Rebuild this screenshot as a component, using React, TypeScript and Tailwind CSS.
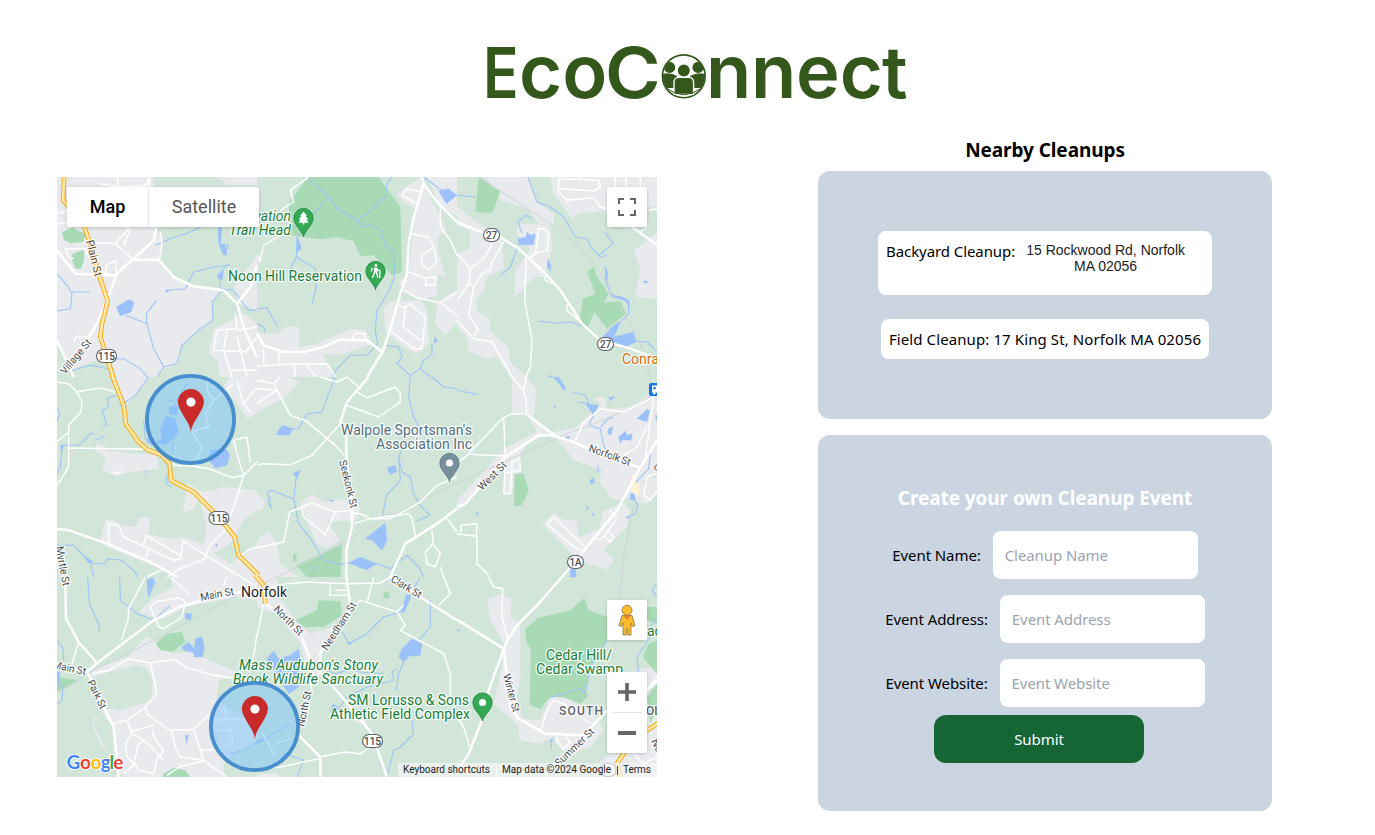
import React from "react";

type Tile = {
  x: number;
  y: number;
  urban?: string;
  green?: string;
  park?: string;
  water?: string;
  stream?: string;
  rail?: string;
  minor?: string;
  major?: string;
  highway?: string;
};

// Map geometry, drawn in 600-unit tiles that each cover 200px of the map.
const tiles: Tile[] = [
  {
    x: 0,
    y: 0,
    urban:
      "M0,0 H285 L300,60 L290,150 L320,185 L308,245 L350,300 L420,330 L490,342 L465,375 L468,430 L430,455 L375,505 L362,565 L320,575 L300,600 H180 L160,545 L140,540 L45,580 L0,500Z M485,0 L510,25 L600,25 V0Z M470,455 L530,425 L560,410 L600,440 V600 H490 L480,550 L455,530Z M600,235 L560,290 L530,330 L545,380 L600,400Z",
    park: "M15,165 L45,152 L85,170 L80,195 L40,198 L20,188Z M48,230 L80,218 L82,245 L72,275 L55,275 L42,240Z",
    water: "M178,390 L215,368 L232,375 L222,405 L190,417Z M325,338 L337,340 L330,348Z M485,145 L495,155 L490,200 L505,205 L510,235 L497,230 L484,195Z M480,300 L500,280 L495,310Z",
    stream:
      "M295,205 L340,185 L400,165 L430,150 M0,290 L30,325 L45,350 L40,395 L0,402 M45,345 H100 M205,415 L270,440 L290,515 L320,570 L360,560 L375,505 L430,455 L468,430 L465,375 L490,345 M270,440 L268,410 L298,370 M300,600 L320,570 M330,340 L385,335 L410,285 L470,270 L520,265 M485,160 L490,200 L515,205 L500,235 M515,260 L485,290 L490,335 L530,340 L575,400 L600,400 M45,580 L100,565 L155,575 L170,545 L200,545 L250,575 L270,600",
    minor:
      "M130,20 L185,30 L180,0 M185,30 L260,25 M0,110 L30,100 M0,140 L90,130 M90,195 L175,200 L225,245 M175,200 L215,155 M205,150 L220,155 L200,205 M25,215 L85,215 L100,250 L145,290 M25,215 L35,240 L50,245 M145,290 L148,265 L175,250 L178,290 M310,165 L315,200 L308,245 M50,495 L60,478 L100,480 M480,460 L470,520 L570,525 M480,460 L535,455 M510,460 L500,520 L525,600 M535,410 L540,460 L600,450 M540,480 L570,600 M525,580 H600 M565,525 L600,480",
    major:
      "M0,220 L55,290 L175,295 M298,150 L290,190 L230,245 L180,290 L150,370 L120,440 L90,490 L30,560 M230,248 L305,248 L350,300 L410,328 L500,340 L540,380 L560,450 L600,540 M0,490 L50,600 M540,380 L580,330 L600,265 M275,0 V40 M170,100 L275,15",
    highway: "M22,-10 L18,70 L75,130 L105,215 L125,290 L152,372 L135,440 L130,480 L170,605",
  },
  {
    x: 200,
    y: 0,
    urban:
      "M490,0 L420,50 L440,75 L475,95 L455,290 L425,315 L440,345 L490,370 L540,355 L545,290 L565,300 L545,230 L540,180 L570,160 L545,110 L520,60Z M380,390 L400,375 L490,370 L510,400 L515,500 L480,530 L440,510 L385,465Z M540,375 L600,340 V440 L560,475 L535,440Z M0,470 L60,470 L90,448 L128,450 L125,510 L180,500 L280,455 L325,458 L345,500 L290,520 L250,535 L200,530 L210,560 L240,600 H0Z M510,0 H600 V120 L545,80Z M0,235 L15,235 L10,250 L0,265Z",
    park: "M155,0 H365 L430,90 L435,285 L405,295 L350,235 L310,237 L290,193 L240,180 L190,187 L140,180 L100,175 L95,80 L130,30Z",
    water: "M545,42 L575,35 L600,55 L568,80Z M122,178 L133,215 L120,225Z M535,478 L541,495 L530,497Z",
    stream:
      "M155,5 L215,60 L175,105 L120,180 L118,240 L175,275 L178,330 L165,380 M118,240 L100,275 M215,60 L240,95 L300,130 L330,110 L385,60 L390,20 L405,0 M300,130 L320,150 L345,145 L370,160 L385,205 L410,225 L412,300 L395,345 L360,400 L355,460 L362,500 L330,535 L280,535 L240,575 L225,600 M500,0 L540,30 L560,45 M0,395 L30,392 L45,420 L60,445 M0,440 L20,450 L25,465 M380,505 L425,510 L435,540 L420,560 L460,595 L490,575 L520,600 M490,575 L500,550 L525,530 V500",
    minor:
      "M155,0 L100,40 L110,75 L70,100 M70,175 L20,205 L8,255 M490,45 L450,35 L435,55 L475,78 M460,170 L515,180 L530,210 L495,235 L492,258 L515,278 L540,255 L530,210 M455,285 L500,302 L535,300 L532,325 L505,325 L510,303 M440,340 L480,362 L550,378 L600,415 M550,378 L600,345 M550,90 L550,150 L580,190 L600,235 M425,385 L440,392 L460,382 L505,420 L495,515 L470,515 L400,462 M445,392 L438,450 L490,490 M285,485 L295,468 L325,470 V490 M20,515 V560 M65,525 V565 M0,568 L110,560 L210,560 L235,600 M110,560 L115,600 M150,560 L160,580 L180,600",
    major: "M495,0 L500,20 L470,120 L455,200 L450,290 L430,350 L405,440 L378,522 L330,600 M500,20 L540,75 L600,135 M0,468 L20,505 L80,525 L140,525 L200,510 L250,488 L330,490 L372,522",
  },
  {
    x: 400,
    y: 0,
    urban:
      "M85,0 H215 L240,75 L290,110 V145 L245,140 L210,95 L130,70 L105,25Z M280,0 H600 V90 L450,100 L365,110 L345,125 L290,50Z M0,90 L60,135 L100,160 L135,190 L140,275 L90,300 L80,345 L55,370 L60,400 L100,430 L95,460 L155,510 L160,555 L210,600 H160 L120,540 L80,545 L35,520 L30,480 L0,450Z M180,140 L280,145 L285,215 L260,300 L230,300 L205,330 L172,358 L175,280 L220,220 L180,170Z M530,220 L600,170 V365 L535,360 L550,270Z",
    green: "M0,145 L40,160 L38,215 L0,230Z",
    park: "M65,0 L130,45 L105,108 L55,105Z M390,285 L410,268 L420,300 L455,350 L440,378 L490,372 L507,410 L450,455 L412,405 L390,455 L365,440 L378,365 L415,350Z",
    water: "M182,185 L208,180 L210,165 L220,175 L235,170 L230,203 L185,203Z M272,245 L282,265 L280,283 L270,270Z M437,480 L470,445 L492,433 L470,480 L530,465 L537,495 L510,508 L470,495Z M443,265 L452,290 L450,320 L455,330 L447,310Z M460,355 L490,358 L515,370 L518,390 L505,370 L465,360Z M558,312 L572,312 L568,322Z M275,595 L290,600 H275Z",
    stream:
      "M213,0 L240,75 L280,90 L320,120 L355,180 L390,185 L405,215 L430,240 L450,235 M445,165 L468,200 L425,235 M195,168 L182,135 L205,115 L225,125 M180,215 L160,270 L130,295 M245,433 L295,438 L345,435 L370,448 M0,55 L55,60 M450,280 L445,310 L460,350 L515,375 L515,410 L495,430 M535,492 L570,495 L600,525",
    rail: "M65,0 L150,55 L280,140 L370,210 L440,300 L500,410 L545,480 L560,540 L580,600",
    minor:
      "M305,0 V45 L330,70 L410,62 L430,90 L450,95 M305,5 L425,10 L430,30 L410,42 L310,35 M370,0 V5 M475,0 V30 M508,0 V30 M550,0 V30 M575,100 L600,95 M0,230 L40,275 L35,320 L0,370 M40,275 L85,240 L105,200 M35,320 L50,330 L35,415 L65,460 L50,475 M50,330 L75,290 L100,280 L105,255 L140,195 M0,430 L50,485 L105,495 L150,570 L165,600 M235,230 L245,155 L265,155 L275,175 L270,220 L235,230 L215,245 M207,245 L203,370 L225,490 L220,570 L207,600 M265,295 L265,310 L300,325 M330,380 L330,400 L370,435 M550,165 L570,150",
    major: "M0,135 L60,160 L130,180 L185,215 L265,290 L310,340 L375,440 L430,490 L520,515 L600,545 M525,150 L600,203",
  },
  {
    x: 0,
    y: 200,
    urban:
      "M175,0 H275 L265,20 L235,55 L210,85 L190,40Z M490,40 L520,0 H600 V110 L570,125 L535,70Z M117,200 L140,205 L150,222 L300,235 L305,275 L220,285 L175,298 L135,280 L148,240 L117,225Z M390,318 L440,345 L500,330 L600,340 V600 H350 L300,570 L150,510 L130,490 L145,430 L170,428 L190,445 L235,450 L250,420 L280,422 L275,470 L330,485 L380,480 L440,500 L450,450 L425,360 L410,400 L378,405Z",
    green: "M600,400 L560,430 L520,500 L470,530 L520,560 L600,500Z",
    water:
      "M455,250 L460,218 H510 L518,235 L510,265 L475,273Z M310,155 L328,118 L355,125 L365,165 L345,188 L322,205 L298,198 L315,180Z M335,90 L365,88 L360,115 L338,110Z M328,68 H350 L345,76Z M272,180 L290,185 L285,205 L270,195Z M78,535 L110,555 L95,557Z M475,500 L482,503 L478,510Z M265,285 L270,280 V288Z M10,205 H20 L14,225Z",
    stream:
      "M275,0 L235,55 L190,88 L210,70 M175,55 L150,65 L155,90 L135,100 L150,145 L138,148 M145,178 L115,190 M112,170 L100,170 L65,205 L15,205 L10,270 L0,290 M0,90 L8,110 L0,135 M330,290 L328,320 L345,330 M260,130 L265,185 L280,200 M350,185 L345,230 M350,90 L365,60 L390,20 M0,505 L50,505 L100,555 L110,600 M145,560 L150,545 L195,550 L235,585 L240,600 M105,560 H145",
    minor:
      "M0,15 L35,20 L60,45 L75,75 L72,105 L35,145 L35,270 L0,325 M55,45 L130,33 L175,45 M0,195 L35,165 M35,213 L260,217 M155,500 L155,440 L185,445 L200,480 L350,550 L370,545 L378,492 L600,630 M260,500 L268,475 L370,535 M275,515 L268,540 M350,235 V265 L410,268 L455,275 L525,302 L560,295 M415,268 V250 M165,283 L180,290 L195,283 M530,190 L570,180 L580,255 M530,190 L545,250 L560,295 L600,255 M560,295 L530,390 L500,465 L455,510 L445,545 L370,575 L330,600 M530,20 L470,70 L445,110 L455,150 L405,163 L435,215 L415,250 M470,70 L450,40 L455,0 M540,10 L560,80 L580,105 M560,80 L600,30 M270,600 L320,575 M545,540 L580,515 L600,512",
    major: "M0,457 L30,458 L150,500 L280,555 L360,600",
    highway: "M165,-5 L200,85 L207,142 L245,195 L270,217 L315,235 L338,260 L342,310 L410,345 L465,400 L505,445 L533,480 L545,535 L605,595",
  },
  {
    x: 200,
    y: 200,
    urban:
      "M0,0 H95 L125,15 L80,65 L0,105Z M0,350 L25,375 L15,400 L0,402Z M130,380 L165,350 L200,375 L260,365 L310,395 L295,430 L210,435 L250,490 L210,512 L180,500 L160,455Z M0,490 L35,462 L60,500 L70,560 L125,600 H0Z",
    park: "M118,565 L255,502 L250,600 H150Z M108,530 H118 V553 H108Z",
    water: "M57,173 L75,145 L108,155 L97,175Z M390,272 L415,265 L420,285 L398,292Z M108,290 L130,280 L120,305Z M325,485 L385,437 L390,490 L375,520 L345,490Z M275,558 L310,540 L360,560 L330,578 L305,570Z M33,360 L45,395 L38,390Z M162,570 L180,572 L170,576Z M215,370 H230 L228,375Z",
    stream:
      "M235,0 L215,50 L195,105 L150,110 L125,155 L100,155 M460,0 L455,60 L470,120 L495,170 M445,195 L425,240 L430,310 L388,355 L380,400 L375,430 M425,240 L435,285 L460,300 L470,350 L485,380 L520,415 L480,432 M118,300 L110,365 L40,340 L30,350 L42,370 M110,365 L125,440 L165,490 L200,550 L250,562 L280,558 M360,560 L400,575 L450,535 L485,570 L500,600 M525,0 L560,30 L600,35",
    rail: "M0,630 L150,555 L400,418 L600,318",
    minor:
      "M190,0 L240,15 L270,0 M270,0 L310,35 M300,45 L330,62 L415,30 L430,50 L430,75 L365,120 L270,85 M0,10 L50,20 L70,0 M0,80 L60,40 L0,35 M50,20 L100,115 L145,130 L235,205 L262,235 M250,140 L165,235 L100,263 L15,260 L0,265 M0,512 L80,495 L98,405 L165,378 L235,405 L285,400 M133,385 L140,420 L180,450 L205,475 L235,405 M290,408 L315,412 L340,425 L290,440 M340,425 L400,425 L490,375 L540,325 L600,300 M340,425 L455,410 L465,425 L475,475 M525,460 L528,500 L505,525 L510,560 L535,570 L550,530 L528,500 M550,570 L560,600 M570,425 L600,465",
    major: "M335,0 L270,75 L250,135 L268,180 V240 L285,390 L285,450 L268,520 V600 M600,395 L540,440 L445,500 L400,600",
  },
  {
    x: 400,
    y: 200,
    urban:
      "M165,0 H210 L238,40 L230,130 L285,165 L350,155 L430,80 L410,62 L445,60 L450,95 L520,90 L600,35 V300 L560,310 L525,355 L500,370 L465,365 L425,310 L435,280 L350,250 L300,185 L260,175 L210,200 L185,245 L190,280 L160,355 L140,350 L150,250 L90,300 L20,390 L0,400 V370 L150,210 L240,165 L210,110 L165,110Z M255,440 L290,408 L320,428 H358 L365,480 L425,455 L440,400 L500,378 L520,400 L510,450 L440,520 L470,550 L450,578 L395,560 L345,530Z M530,370 L570,380 L600,350 V290 L540,330Z",
    park: "M172,290 H200 L215,340 L195,385 L172,388Z M145,185 L150,200 L145,215Z",
    water:
      "M385,80 L425,85 L410,115Z M290,0 H305 L325,30 L323,42Z M290,85 L297,90 L293,95Z M455,62 L475,58 L460,72Z M455,155 L468,148 L462,175 L453,170Z M485,180 L505,162 L510,175 L525,170 L523,190 L495,188 L490,200Z M540,125 L570,97 L578,100 L570,135 L555,130Z M398,310 L410,303 L413,317 L402,322Z M388,385 L396,395 L392,400Z M58,405 L65,410 L62,418Z M520,350 L530,345 L535,370 L520,368Z M340,575 H357 V600 H340Z M325,180 L340,178 L335,187Z M505,420 L520,418 L512,425Z M595,115 H600 V135Z M405,407 L411,413 L407,418Z",
    stream: "M0,40 L25,45 L60,52 M350,45 L385,55 L410,115 L395,145 L430,155 L440,205 L450,225 M365,75 L395,80 M510,420 L535,410 L542,385 L530,360 L528,325 L575,275 L580,230 M430,150 L455,125 L470,120 M425,285 L422,265",
    rail: "M0,320 L150,250 L330,170 L400,145 L530,90 L600,45 M530,380 L500,540 L485,700",
    minor:
      "M165,0 L200,40 L208,0 M200,40 L208,70 V110 L160,112 L135,125 L30,235 L0,260 M140,125 L145,235 M35,232 L145,237 M140,350 L145,260 M165,255 L188,245 L190,280 L145,288 M165,255 L160,350 L140,350 M355,190 L378,140 L430,95 L500,105 L560,75 L590,60 M590,60 L565,240 M570,150 L540,210 L500,235 M270,440 L290,420 L385,510 M270,440 L350,510 L375,520 M415,485 L430,490 L480,425 M440,475 L460,495 L470,480 L450,460 M600,290 L570,300 L560,355 L580,370 L600,340 M0,470 L58,478 L60,440 L12,445 V465 M60,478 V560 L95,595 M460,400 L480,425",
    major: "M0,390 L25,380 L130,260 L145,240 L245,175 L285,175 L350,195 L450,240 L550,272 M208,112 L300,180 M600,190 L545,280 L480,400 L315,600",
  },
  {
    x: 0,
    y: 400,
    urban:
      "M245,105 L290,60 L350,30 L340,0 H600 V70 L540,60 L385,90 L320,125 L275,115Z M105,280 L210,240 L270,178 L350,230 L400,225 L550,290 L485,310 L480,360 L520,400 L600,420 V600 H205 L175,580 L165,440 L145,425 L140,400 L105,440 L130,500 L175,560 L180,600 L250,600 L270,560 L300,520 L200,400 L180,395 L280,375 L288,310 L270,280 L230,265 L190,280 L180,305 L160,285 L105,300Z M105,430 L165,390 L270,400 L400,420 L520,400 L480,600 H185Z",
    green: "M155,285 L200,275 L240,265 L270,275 L285,310 L285,370 L180,402 L130,380 L110,310Z M500,565 L535,525 L600,495 V600 H500Z",
    park: "M297,200 L330,170 L375,165 L385,195 L345,225 L310,220Z M0,300 L65,310 L0,345Z M320,590 L350,572 L385,580 L400,600 H315Z",
    water: "M375,210 L395,195 L412,215 L415,185 L435,180 L442,210 L437,240 L410,240 L412,228 L380,220Z M270,15 L285,0 L295,15 L275,60Z M385,475 L395,475 L388,500Z M0,285 H8 V320 H0Z M385,108 L405,110 L400,130 L385,125Z",
    stream: "M92,0 L97,80 L125,140 L127,165 M188,0 L190,70 L240,110 L290,130 L340,85 M270,0 L275,60 M0,190 L18,215 L20,250 M0,320 L18,330 L15,370 L0,380 M520,530 L560,520 L600,495",
    rail: "M0,350 L100,285 L300,185 L540,55",
    minor:
      "M265,0 L215,95 L213,130 L193,190 M65,195 L45,260 M280,90 L295,75 L365,62 L385,75 L375,120 L320,155 L305,150Z M340,0 L400,55 M510,0 L500,25 M105,290 L155,280 L215,245 L280,258 L350,247 L390,272 L470,295 L530,303 M280,258 L300,350 L265,390 L210,430 L165,440 M265,390 L270,410 L345,465 L355,510 L370,540 L440,550 L510,600 M220,465 L295,442 M210,430 L225,470 L205,500 L210,540 L230,560 L245,500 L262,490 L320,550 M262,490 L225,470 M285,460 L295,490 L320,520 L300,545 L290,590 L245,580 L235,560 L200,590 M345,460 L410,457 L460,410 M410,457 L440,550 M430,520 L470,518 M440,553 L370,568 L330,595 M600,170 L585,270 M475,430 L550,425 L600,430 M500,390 L510,425 M475,462 L520,458 L530,495 L505,510",
    major: "M25,0 L27,125 L65,195 L120,258 M90,285 L120,258 L290,130 L370,88 L430,72 L550,45 L600,35 M0,265 L90,285 L105,310 L140,390 L170,450 L185,600",
  },
  {
    x: 200,
    y: 400,
    urban: "M0,0 H60 L65,60 L110,120 L160,170 L230,150 L190,230 L195,290 L160,310 L130,200 L60,110 L0,90Z M285,425 L320,415 L330,440 L310,445Z M0,590 H60 L70,600 H0Z",
    park: "M115,130 L180,100 L185,70 L250,72 L255,115 L200,150 L140,150Z M378,48 L397,42 L395,65 L380,62Z",
    water: "M30,245 L50,222 L65,245 L100,235 L125,215 L130,245 L125,330 L95,350 L75,320Z M435,215 L465,185 L495,200 L490,235 L455,238 L440,255 L425,240Z M435,105 L448,50 L462,60 L440,108Z M220,405 L228,380 L250,395 L225,410Z M0,490 L20,485 L0,500Z M272,195 L285,198 L275,204Z",
    stream:
      "M235,145 L260,170 L275,200 L330,170 L380,120 L430,105 L455,60 L490,0 M520,70 V150 L485,190 M440,255 L425,290 L418,340 M190,275 L240,290 L280,275 L310,285 L380,290 M245,395 L270,360 L330,330 L410,310 L405,285 L420,275 M465,430 L470,470 L430,510 L410,520 L390,600 M70,545 L85,530 L140,550 L120,600 M0,500 L100,440",
    minor:
      "M0,40 L80,22 L150,15 L210,18 L270,20 L370,18 L400,0 M220,25 L218,55 L270,55 M235,40 L270,40 M275,100 L310,70 L420,105 L440,85 M420,105 L445,145 L430,160 L560,230 L580,290 V380 M330,78 L350,0 M0,180 L20,80 M160,290 L165,350 M185,540 L265,525 L310,530 L340,510 M15,465 L55,540 M100,485 L55,500 M0,575 L70,570 L185,545 M560,0 L580,50 L545,85",
    major: "M25,80 L70,110 L130,170 L165,260 L230,330 L300,415 L345,470 L390,600 M125,475 L190,540 V600 M268,0 L275,50 L280,90 L240,150 L190,230 L190,290 M400,0 L490,60 L600,130",
    highway: "M-5,-5 L20,25 L25,80",
  },
  {
    x: 400,
    y: 400,
    urban: "M90,65 L130,52 L165,65 L160,115 L190,150 L190,300 L180,360 L195,425 L250,430 L280,360 L330,365 L410,410 L440,460 L400,510 L330,530 L310,515 L290,480 L250,500 L187,490 L185,445 L110,380 L135,270 L140,200 L100,130Z M450,290 L600,270 V600 H425 L430,550 L480,520 L450,490Z",
    green: "M600,330 L575,330 V430 L600,400Z",
    park: "M205,155 L245,122 L340,100 L382,62 L395,100 L450,120 L450,190 L400,270 L385,345 L395,355 L370,380 L320,360 L280,360 L250,395 L218,385 L222,220 L207,190Z M570,90 H600 V140 L570,130Z M560,230 L575,200 L600,190 V290 L560,245Z M570,360 L600,320 V400 L580,440Z",
    water: "M280,488 L288,485 L283,500Z M0,158 L10,158 L0,163Z",
    stream: "M278,362 L320,350 L370,335 L385,350 L400,270 L450,190 M600,120 L580,150 L580,180 L540,240 L545,290 M600,20 L585,40 L600,60 M283,500 V515",
    minor:
      "M95,0 L110,30 L137,35 L135,120 L150,180 M250,465 L270,400 L290,370 L320,380 L400,440 M300,480 L300,495 L320,515 L340,495 L325,480 M0,420 L20,450 L38,510 M570,340 L600,300 M560,560 L600,540 M530,530 L560,560 L580,600",
    major: "M315,0 L245,80 L180,145 L150,190 L95,340 L75,430 L35,530 L5,575 M0,128 L140,215 L150,300 L160,390 L185,425 L265,470 L380,475 L450,400 M260,600 L380,475 M570,340 L600,310",
    highway: "M605,437 L540,480 L500,530 L480,560 L495,610",
  },
];

function Layer({ k, fill, stroke, w }: { k: keyof Tile; fill?: string; stroke?: string; w?: number }) {
  return (
    <>
      {tiles.map((t, i) =>
        t[k] ? (
          <path
            key={i}
            d={t[k] as string}
            transform={`translate(${t.x} ${t.y}) scale(0.33333)`}
            fill={fill ?? "none"}
            stroke={stroke}
            strokeWidth={w}
            strokeLinejoin="round"
          />
        ) : null,
      )}
    </>
  );
}

type LabelProps = { x: number; y: number; t: string; w?: number; size?: number; rot?: number; c?: string; italic?: boolean; medium?: boolean };

function Label({ x, y, t, w, size = 14, rot = 0, c = "#188038", italic, medium }: LabelProps) {
  return (
    <text
      x={x}
      y={y}
      transform={rot ? `rotate(${rot} ${x} ${y})` : undefined}
      fontSize={size}
      fill={c}
      stroke="#ffffff"
      strokeWidth={2.6}
      strokeOpacity={0.85}
      strokeLinejoin="round"
      paintOrder="stroke"
      fontStyle={italic ? "italic" : undefined}
      fontWeight={medium ? 500 : 400}
      textLength={w}
    >
      {t}
    </text>
  );
}

function Shield({ x, y, t, w }: { x: number; y: number; t?: string; w: number }) {
  return (
    <g>
      <rect x={x - w / 2} y={y - 6.5} width={w} height={13} rx={6.5} fill="#fff" stroke="#5f6368" strokeWidth={1.1} />
      {t && (
        <text x={x} y={y + 3.6} fontSize={10} textAnchor="middle" fill="#3c4043" stroke="#3c4043" strokeWidth={0.2}>
          {t}
        </text>
      )}
    </g>
  );
}

// Small drop pin; (x, y) is the centre of its head.
function Poi({ x, y, c, edge, children }: { x: number; y: number; c: string; edge: string; children: React.ReactNode }) {
  return (
    <g transform={`translate(${x} ${y})`}>
      <path d="M0,18.5 C-1.2,12.5 -9.6,7.5 -9.6,0 A9.6,9.6 0 0 1 9.6,0 C9.6,7.5 1.2,12.5 0,18.5Z" fill={c} stroke={edge} strokeWidth={0.8} />
      {children}
    </g>
  );
}

function CleanupMarker({ x, y }: { x: number; y: number }) {
  return (
    <g>
      <circle cx={x} cy={y} r={43.6} fill="#7cc4fb" fillOpacity={0.5} stroke="#3f88cb" strokeOpacity={0.93} strokeWidth={3.8} />
      <g transform={`translate(${x + 0.4} ${y - 17.4})`}>
        <path d="M0,30 C-0.6,20 -13,9 -13,0 A13,13 0 0 1 13,0 C13,9 0.6,20 0,30Z" fill="#c92a2a" />
        <circle r={4.6} fill="#fff" />
      </g>
    </g>
  );
}

function MapCanvas() {
  const road = "#4a4d51";
  return (
    <svg width="600" height="600" viewBox="0 0 600 600" className="block font-[Roboto,sans-serif]">
      <rect width="600" height="600" fill="#d1e6d9" />
      <Layer k="urban" fill="#e8eaed" />
      <Layer k="green" fill="#d1e6d9" />
      <Layer k="park" fill="#a8dab5" />
      <Layer k="stream" stroke="#9dc3f5" w={3.2} />
      <Layer k="water" fill="#9cc0f9" stroke="#9cc0f9" w={1} />
      <Layer k="rail" stroke="#cfd3d6" w={3} />
      <path d="M576,298 l3,1 l-1,7 h5 l-1,12 l-7,-2 l-3,-10z" fill="#fef3d6" />
      <Layer k="minor" stroke="#ffffff" w={4.4} />
      <Layer k="major" stroke="#ffffff" w={7.5} />
      <Layer k="highway" stroke="#f7ab1c" w={14} />
      <Layer k="highway" stroke="#fee9a8" w={8} />

      <Label x={29} y={64} t="Plain St" w={37} size={11} rot={76} c="#6b4a1c" />
      <Label x={8} y={198} t="Village St" w={42} size={10.5} rot={-50} c={road} />
      <Label x={-1} y={370} t="Myrtle St" w={40} size={10.5} rot={80} c={road} />
      <Label x={144} y={424} t="Main St" w={34} size={10.5} rot={-11} c={road} />
      <Label x={-5} y={491} t="Main St" w={34} size={10.5} rot={12} c={road} />
      <Label x={30} y={505} t="Park St" w={31} size={10.5} rot={64} c={road} />
      <Label x={216} y={433} t="North St" w={37} size={10.5} rot={45} c={road} />
      <Label x={270} y={474} t="Needham St" w={55} size={10.5} rot={-57} c={road} />
      <Label x={247} y={550} t="North St" w={36} size={10.5} rot={-78} c={road} />
      <Label x={282} y={284} t="Seekonk St" w={49} size={10.5} rot={76} c={road} />
      <Label x={425} y={314} t="West St" w={36} size={10.5} rot={-45} c={road} />
      <Label x={531} y={274} t="Norfolk St" w={44} size={10.5} rot={20} c={road} />
      <Label x={333} y={404} t="Clark St" w={34} size={10.5} rot={31} c={road} />
      <Label x={446} y={498} t="Winter St" w={39} size={10.5} rot={75} c={road} />
      <Label x={502} y={590} t="Summer St" w={50} size={10.5} rot={-44} c={road} />
      <Label x={594} y={564} t="Nor" size={10.5} rot={65} c={road} />
      <Label x={596} y={289} t="Ce" size={10.5} rot={60} c={road} />
      <Label x={163} y={44} t="Reservation" w={71} italic />
      <Label x={172} y={58} t="Trail Head" w={62} italic />
      <Label x={171} y={104} t="Noon Hill Reservation" w={134} />
      <Label x={284} y={258} t="Walpole Sportsman's" w={131} c="#546e7a" />
      <Label x={319} y={272} t="Association Inc" w={96} c="#546e7a" />
      <Label x={182} y={493} t="Mass Audubon's Stony" w={139} italic />
      <Label x={176} y={507} t="Brook Wildlife Sanctuary" w={150} italic />
      <Label x={291} y={528} t="SM Lorusso & Sons" w={121} />
      <Label x={273} y={542} t="Athletic Field Complex" w={140} />
      <Label x={489} y={483} t="Cedar Hill/" w={66} />
      <Label x={479} y={497} t="Cedar Swamp" w={87} />
      <Label x={565} y={187} t="Conra" c="#d56e0c" />
      <Label x={590} y={459} t="ad" />
      <Label x={184} y={420} t="Norfolk" w={46} c="#202124" />
      <Label x={502} y={538} t="SOUTH" w={44} size={12} medium c="#5f6368" />
      <Label x={589} y={538} t="OL" size={12} medium c="#5f6368" />

      <Shield x={49.5} y={179} t="115" w={20} />
      <Shield x={162} y={341} t="115" w={20} />
      <Shield x={315.5} y={564} t="115" w={20} />
      <Shield x={434.5} y={58} t="27" w={16} />
      <Shield x={548.5} y={167} t="27" w={16} />
      <Shield x={518.5} y={385} t="1A" w={16} />
      <Shield x={551} y={593} w={16} />

      <Poi x={246.5} y={41} c="#34a853" edge="#188038">
        <path d="M0,-6.5 L3.5,-2 H2.2 L4.7,1.5 H3 L5,4.7 H0.8 V6.5 H-0.8 V4.7 H-5 L-3,1.5 H-4.7 L-2.2,-2 H-3.5Z" fill="#fff" />
      </Poi>
      <Poi x={318.5} y={94} c="#34a853" edge="#188038">
        <circle cx="0.5" cy="-5.6" r="1.4" fill="#fff" />
        <path d="M-1.2,-3.6 L1.4,-3.6 L2,1.5 L-1.8,1.5Z" fill="#fff" />
        <path d="M-0.8,1 L-1.8,4 L-3.2,7 M0.8,1 L1.8,4 L2.2,7 M1.2,-3 L2.2,-0.8 L4.2,-0.4 M4.3,-1.4 V7 M-3,-3.2 L-4.4,0.4" fill="none" stroke="#fff" strokeWidth="1.4" />
      </Poi>
      <Poi x={392.5} y={286} c="#78909c" edge="#546e7a">
        <circle r="3.6" fill="#fff" />
      </Poi>
      <Poi x={425.5} y={525.5} c="#34a853" edge="#188038">
        <circle r="3.6" fill="#fff" />
      </Poi>

      <rect x="592" y="206" width="14" height="13" rx="2" fill="#1a73e8" />
      <path d="M595,208.5 h10 v7 h-10z M596,215 h2.5 v2.2 h-2.5z" fill="#fff" />
      <path d="M596.5,210 h2.3 v2.3 h-2.3z M600,210 h2.3 v2.3 h-2.3z" fill="#1a73e8" />

      <CleanupMarker x={133.5} y={242.5} />
      <CleanupMarker x={197.5} y={549.5} />

      <rect x="341" y="586" width="259" height="14" fill="#f5f5f5" fillOpacity="0.7" />
      <g fontSize="10" fill="#222">
        <text x="346" y="596" textLength="87">Keyboard shortcuts</text>
        <text x="445" y="596" textLength="109">Map data ©2024 Google</text>
        <text x="566" y="596" textLength="28">Terms</text>
      </g>
      <path d="M439.5,586 v14" stroke="#ffffff" strokeWidth="1" />
      <path d="M560.5,589 v9" stroke="#444" strokeWidth="1" />

      <g fontSize="19" stroke="#fff" strokeWidth="2" paintOrder="stroke" className="font-[Lato,sans-serif] font-bold">
        <text x="9.5" y="592" fill="#4285f4" fontSize="19">G</text>
        <text x="23" y="592" fill="#ea4335">o</text>
        <text x="33.5" y="592" fill="#fbbc05">o</text>
        <text x="43.8" y="592" fill="#4285f4">g</text>
        <text x="52.6" y="592" fill="#34a853">l</text>
        <text x="56.2" y="592" fill="#ea4335">e</text>
      </g>
    </svg>
  );
}

function MapPanel() {
  return (
    <div className="relative h-[600px] w-[600px] shrink-0 overflow-hidden font-[Roboto,sans-serif] tracking-normal">
      <MapCanvas />
      <div className="absolute top-[10px] left-[10px] flex h-10 rounded-[2px] bg-white text-[18px] shadow-[0_1px_4px_-1px_rgba(0,0,0,0.3)]">
        <button className="w-[82px] border-r border-[#e6e6e6] font-medium text-black">Map</button>
        <button className="w-[110px] text-[#565656]">Satellite</button>
      </div>
      <button className="absolute top-[10px] right-[10px] flex size-10 items-center justify-center rounded-[2px] bg-white shadow-[0_1px_4px_-1px_rgba(0,0,0,0.3)]">
        <svg width="18" height="18" viewBox="0 0 18 18" fill="none" stroke="#666" strokeWidth="2">
          <path d="M1,6 V1 H6 M12,1 H17 V6 M17,12 V17 H12 M6,17 H1 V12" />
        </svg>
      </button>
      <div className="absolute right-[10px] bottom-6 flex flex-col gap-8">
        <button className="flex size-10 items-center justify-center rounded-[2px] bg-white shadow-[0_1px_4px_-1px_rgba(0,0,0,0.3)]">
          <svg width="18" height="32" viewBox="0 0 18 32">
            <path d="M4,11.5 H14 L17,21.5 L14.5,22.5 L13,19 V31 H9.7 V25 H8.3 V31 H5 V19 L3.5,22.5 L1,21.5Z" fill="#fbbc2c" stroke="#8d7440" strokeWidth="0.8" />
            <path d="M5.5,11.3 H12.5 L9.3,16Z" fill="#e27b36" />
            <circle cx="9" cy="6.2" r="5" fill="#fbbc2c" stroke="#8d7440" strokeWidth="0.8" />
          </svg>
        </button>
        <div className="flex h-[81px] w-10 flex-col items-center rounded-[2px] bg-white shadow-[0_1px_4px_-1px_rgba(0,0,0,0.3)]">
          <button className="flex h-10 w-10 items-center justify-center">
            <svg width="18" height="18" viewBox="0 0 18 18">
              <path d="M7.2,0 h3.6 v7.2 h7.2 v3.6 h-7.2 v7.2 h-3.6 v-7.2 h-7.2 v-3.6 h7.2z" fill="#666" />
            </svg>
          </button>
          <div className="h-px w-[30px] bg-[#e6e6e6]" />
          <button className="flex h-10 w-10 items-center justify-center">
            <svg width="18" height="4" viewBox="0 0 18 4">
              <rect width="18" height="4" fill="#666" />
            </svg>
          </button>
        </div>
      </div>
    </div>
  );
}

function Logo() {
  return (
    <svg width="440" height="75" viewBox="0 0 440 75" className="font-[Inter,sans-serif] tracking-normal" fill="#34571b" fontWeight="600">
      <text transform="translate(5.9 63) scale(0.84 1)" fontSize="70">E</text>
      <text y="63.3" fontSize="74" x="42 85.3">co</text>
      <text transform="translate(128 63) scale(1.08 1)" fontSize="70">C</text>
      <text y="63.3" fontSize="74" x="229 274 319 362.8">nnec</text>
      <text transform="translate(405 63) scale(1.02 1)" fontSize="71">t</text>
      <clipPath id="badge">
        <circle cx="206.8" cy="41.3" r="21" />
      </clipPath>
      <circle cx="206.8" cy="41.3" r="21.4" fill="#fff" stroke="#34571b" strokeWidth="1.6" />
      <g clipPath="url(#badge)">
        <circle cx="192.6" cy="32.4" r="5.6" />
        <circle cx="221" cy="32.4" r="5.6" />
        <path d="M183,53 V40 Q192,36 200,41 V53Z M231,53 V40 Q222,36 213,41 V53Z" />
        <path d="M197,59.5 V47.5 Q197,42.4 202,42.4 H211.6 Q216.6,42.4 216.6,47.5 V59.5Z" stroke="#fff" strokeWidth="1.4" />
        <circle cx="206.8" cy="35.4" r="6.6" stroke="#fff" strokeWidth="1.2" />
      </g>
      <path d="M190,53.5 Q206.8,66 223.6,53.5" fill="none" stroke="#34571b" strokeWidth="1" />
    </svg>
  );
}

function Field({ label, placeholder }: { label: string; placeholder: string }) {
  return (
    <div className="flex items-center gap-3">
      <label>{label}</label>
      <input placeholder={placeholder} className="h-12 w-[205px] rounded-lg bg-white px-3 placeholder:text-[#9ca3af]" />
    </div>
  );
}

export default function App() {
  return (
    <div className="h-[835px] w-[1375px] overflow-hidden bg-white font-['Noto_Sans',sans-serif] text-[15px] leading-6 tracking-[-0.08px] text-black">
      <header className="flex pt-[35px] pl-[477px]">
        <Logo />
      </header>
      <main className="flex gap-[161px] pt-[28px] pl-[57px]">
        <div className="pt-[39px]">
          <MapPanel />
        </div>
        <div className="flex w-[454px] flex-col">
          <h2 className="h-[33px] text-center text-[19px] font-bold leading-6">Nearby Cleanups</h2>
          <section className="flex h-[248px] flex-col items-center justify-center gap-6 rounded-xl bg-[#cbd5e1]">
            <div className="flex h-16 w-[334px] gap-[10px] rounded-lg bg-white pt-2 pl-2">
              <span className="whitespace-nowrap">Backyard Cleanup:</span>
              <span className="w-[161px] pt-[3px] text-center font-['Liberation_Sans',sans-serif] text-[14px] leading-4 tracking-normal text-[#222]">
                15 Rockwood Rd, Norfolk MA 02056
              </span>
            </div>
            <div className="flex h-10 w-[328px] items-center justify-center whitespace-nowrap rounded-lg bg-white tracking-[0.1px]">
              Field Cleanup: 17 King St, Norfolk MA 02056
            </div>
          </section>
          <section className="mt-4 flex h-[376px] flex-col items-center rounded-xl bg-[#cbd5e1] pt-[51px]">
            <h2 className="mb-[21px] text-[19px] font-bold leading-6 text-white">Create your own Cleanup Event</h2>
            <div className="flex flex-col items-center gap-4">
              <Field label="Event Name:" placeholder="Cleanup Name" />
              <Field label="Event Address:" placeholder="Event Address" />
              <Field label="Event Website:" placeholder="Event Website" />
            </div>
            <button className="mt-2 mr-3 h-12 w-[210px] rounded-xl bg-[#166534] text-white">Submit</button>
          </section>
        </div>
      </main>
    </div>
  );
}
